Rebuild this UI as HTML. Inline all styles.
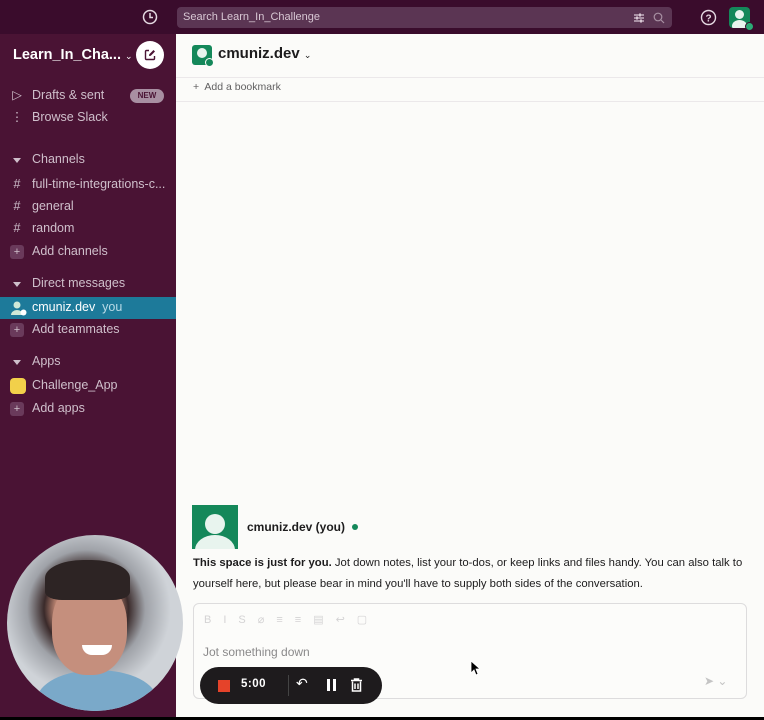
<!DOCTYPE html>
<html><head><meta charset="utf-8"><style>
*{box-sizing:border-box;margin:0;padding:0}
body{width:764px;height:720px;overflow:hidden;font-family:"Liberation Sans",sans-serif;background:#fbfbf9;position:relative}
.top{position:absolute;left:0;top:0;width:764px;height:34px;background:#3a0c2c}
.search{position:absolute;left:177px;top:7px;width:495px;height:21px;background:#5b3553;border-radius:4px;color:#d8c8d4;font-size:11px;line-height:21px;padding-left:6px}
.side{position:absolute;left:0;top:34px;width:176px;height:683px;background:#4a1334}
.main{position:absolute;left:176px;top:34px;width:588px;height:683px;background:#fbfbf9}
.bottom{position:absolute;left:0;top:717px;width:764px;height:3px;background:#000}
.it{position:absolute;left:0;width:176px;height:22px;font-size:12.5px;color:#cfbfcb;line-height:21px;padding-left:32px}
.ic{position:absolute;left:10px;top:0;width:14px;text-align:center;color:#cfbfcb}
.plus{position:absolute;left:10px;top:4px;width:14px;height:14px;background:#6a3a5b;border-radius:3px;color:#cfbfcb;font-size:11px;line-height:14px;text-align:center}
.tri{position:absolute;left:13px;top:9px;width:0;height:0;border-left:4px solid transparent;border-right:4px solid transparent;border-top:5px solid #cfbfcb}
.txt{color:#1d1c1d;font-size:11.3px;line-height:21px}
</style></head><body>
<div class="top">
<svg style="position:absolute;left:142px;top:9px" width="16" height="16" viewBox="0 0 16 16"><circle cx="8" cy="8" r="6.5" fill="none" stroke="#e5d9e2" stroke-width="1.5"/><path d="M8 4v4.5h3" fill="none" stroke="#e5d9e2" stroke-width="1.5"/></svg>
<div class="search">Search Learn_In_Challenge
<svg style="position:absolute;left:456px;top:5px" width="12" height="12" viewBox="0 0 12 12"><path d="M1 3h10M1 6h10M1 9h10" stroke="#d8c8d4" stroke-width="1.2"/><rect x="6" y="1.5" width="2" height="3" fill="#d8c8d4"/><rect x="3" y="4.5" width="2" height="3" fill="#d8c8d4"/><rect x="7" y="7.5" width="2" height="3" fill="#d8c8d4"/></svg>
<svg style="position:absolute;left:476px;top:5px" width="12" height="12" viewBox="0 0 12 12"><circle cx="5" cy="5" r="3.8" fill="none" stroke="#a890a3" stroke-width="1.2"/><path d="M8 8l3 3" stroke="#a890a3" stroke-width="1.2"/></svg>
</div>
<svg style="position:absolute;left:700px;top:9px" width="17" height="17" viewBox="0 0 17 17"><circle cx="8.5" cy="8.5" r="7" fill="none" stroke="#e5d9e2" stroke-width="1.4"/><text x="8.5" y="12.5" font-size="10" text-anchor="middle" fill="#e5d9e2" font-family="Liberation Sans" font-weight="bold">?</text></svg>
<div style="position:absolute;left:729px;top:7px;width:21px;height:21px;background:#14885a;border-radius:4px;overflow:hidden"><div style="position:absolute;left:6px;top:3px;width:9px;height:9px;border-radius:50%;background:#e8f4ee"></div><div style="position:absolute;left:3px;top:13px;width:15px;height:12px;border-radius:50%;background:#e8f4ee"></div></div>
<div style="position:absolute;left:745px;top:22px;width:9px;height:9px;border-radius:50%;background:#2bac76;border:1.5px solid #3a0c2c"></div>
</div>
<div class="side">
<div style="position:absolute;left:13px;top:13px;color:#fff;font-weight:bold;font-size:14.5px;white-space:nowrap">Learn_In_Cha... <span style="font-size:9px;font-weight:normal">⌄</span></div>
<div style="position:absolute;left:136px;top:7px;width:28px;height:28px;border-radius:50%;background:#fff"><svg style="position:absolute;left:8px;top:8px" width="12" height="12" viewBox="0 0 12 12"><path d="M5 1.5H2.5a1 1 0 0 0-1 1v7a1 1 0 0 0 1 1h7a1 1 0 0 0 1-1V7" fill="none" stroke="#4a1334" stroke-width="1.4"/><path d="M5 7l.3-1.8L9.5 1l1.5 1.5-4.2 4.2z" fill="#4a1334"/></svg></div>
<div class="it" style="top:51px"><span class="ic">▷</span>Drafts &amp; sent<span style="position:absolute;left:130px;top:4px;width:34px;height:14px;border-radius:7px;background:#a88fa2;color:#4a1334;font-size:8px;font-weight:bold;line-height:14px;text-align:center">NEW</span></div>
<div class="it" style="top:73px"><span class="ic">⋮</span>Browse Slack</div>
<div class="it" style="top:115px"><span class="tri"></span>Channels</div>
<div class="it" style="top:140px"><span class="ic">#</span>full-time-integrations-c...</div>
<div class="it" style="top:162px"><span class="ic">#</span>general</div>
<div class="it" style="top:184px"><span class="ic">#</span>random</div>
<div class="it" style="top:207px"><span class="plus">+</span>Add channels</div>
<div class="it" style="top:239px"><span class="tri"></span>Direct messages</div>
<div class="it" style="top:263px;background:#1d7a9a;color:#fff"><svg style="position:absolute;left:10px;top:3px" width="17" height="16" viewBox="0 0 17 16"><circle cx="7" cy="5" r="3.5" fill="#cfe9d8"/><path d="M1 15a6 5 0 0 1 12 0z" fill="#cfe9d8"/><circle cx="13.5" cy="12.5" r="3" fill="#fff"/></svg>cmuniz.dev&nbsp; <span style="color:#b9dbe7">you</span></div>
<div class="it" style="top:285px"><span class="plus">+</span>Add teammates</div>
<div class="it" style="top:317px"><span class="tri"></span>Apps</div>
<div class="it" style="top:341px"><span style="position:absolute;left:10px;top:3px;width:16px;height:16px;border-radius:4px;background:#f2d04a"></span>Challenge_App</div>
<div class="it" style="top:364px"><span class="plus">+</span>Add apps</div>
</div>
<div class="main">
<div style="position:absolute;left:16px;top:11px;width:20px;height:20px;border-radius:3px;background:#14885a;overflow:hidden"><div style="position:absolute;left:5px;top:3px;width:10px;height:10px;border-radius:50%;background:#e8f4ee"></div></div>
<div style="position:absolute;left:29px;top:24px;width:9px;height:9px;border-radius:50%;background:#14885a;border:1.5px solid #fbfbf9"></div>
<div style="position:absolute;left:42px;top:11px;font-weight:bold;font-size:15px;color:#1d1c1d">cmuniz.dev <span style="font-size:9px;font-weight:normal">⌄</span></div>
<div style="position:absolute;left:0;top:43px;width:588px;border-top:1px solid #ebe8ea"></div>
<div style="position:absolute;left:17px;top:47px;font-size:10.5px;color:#616061">+&nbsp; Add a bookmark</div>
<div style="position:absolute;left:0;top:67px;width:588px;border-top:1px solid #ebe8ea"></div>
<div style="position:absolute;left:16px;top:471px;width:46px;height:44px;background:#14885a;overflow:hidden"><div style="position:absolute;left:13px;top:9px;width:20px;height:20px;border-radius:50%;background:#e8f4ee"></div><div style="position:absolute;left:3px;top:30px;width:40px;height:30px;border-radius:50%;background:#e8f4ee"></div></div>
<div style="position:absolute;left:71px;top:486px;font-weight:bold;font-size:12px;color:#1d1c1d">cmuniz.dev (you) <span style="display:inline-block;width:6px;height:6px;border-radius:50%;background:#14885a;margin-left:4px;vertical-align:1px"></span></div>
<div class="txt" style="position:absolute;left:17px;top:519px;width:560px"><b>This space is just for you.</b> Jot down notes, list your to-dos, or keep links and files handy. You can also talk to yourself here, but please bear in mind you'll have to supply both sides of the conversation.</div>
<div style="position:absolute;left:17px;top:569px;width:554px;height:96px;border:1px solid #dddcdd;border-radius:6px;background:#fcfcfa">
<div style="position:absolute;left:10px;top:9px;font-size:11px;color:#d4d3d4;letter-spacing:12px">BIS⌀≡≡▤↩▢</div>
<div style="position:absolute;left:9px;top:41px;font-size:12px;color:#8a898a">Jot something down</div>
<div style="position:absolute;left:510px;top:70px;font-size:12px;color:#c4c4c4">➤ ⌄</div>
</div>
<div style="position:absolute;left:24px;top:633px;width:182px;height:37px;border-radius:19px;background:#1e1b1d">
<div style="position:absolute;left:18px;top:13px;width:12px;height:12px;background:#e5432a"></div>
<div style="position:absolute;left:41px;top:11px;color:#fff;font-size:11.5px;font-weight:bold;letter-spacing:.5px">5:00</div>
<div style="position:absolute;left:88px;top:8px;height:21px;border-left:1px solid #444"></div>
<div style="position:absolute;left:96px;top:8px;color:#fff;font-size:14px">↶</div>
<div style="position:absolute;left:127px;top:12px;width:3px;height:12px;background:#fff"></div><div style="position:absolute;left:133px;top:12px;width:3px;height:12px;background:#fff"></div>
<svg style="position:absolute;left:150px;top:11px" width="13" height="14" viewBox="0 0 13 14"><path d="M1 2.5h11M4.5 2.5V1h4v1.5M2.5 3.5v9.5h8V3.5M5 5.5v5.5M8 5.5v5.5" fill="none" stroke="#fff" stroke-width="1.5"/></svg>
</div>
</div>
<div style="position:absolute;left:7px;top:535px;width:176px;height:176px;border-radius:50%;background:radial-gradient(circle at 45% 42%,#c7917c 0,#b88270 22%,#3a2a2a 30%,#9fa2a8 42%,#cfd3d8 60%);overflow:hidden">
<div style="position:absolute;left:30px;top:135px;width:120px;height:60px;border-radius:50%;background:#7aa9c9"></div>
<div style="position:absolute;left:45px;top:45px;width:75px;height:95px;border-radius:45%;background:#c58f7d"></div>
<div style="position:absolute;left:38px;top:25px;width:85px;height:40px;border-radius:45% 45% 20% 20%;background:#2d2424"></div>
<div style="position:absolute;left:75px;top:110px;width:30px;height:10px;border-radius:0 0 15px 15px;background:#fff"></div>
</div>
<div class="bottom"></div>
<svg style="position:absolute;left:470px;top:660px" width="10" height="16" viewBox="0 0 10 16"><path d="M1 1v12l3-3 2 5 2-1-2-5h4z" fill="#000" stroke="#fff" stroke-width=".8"/></svg>
</body></html>
